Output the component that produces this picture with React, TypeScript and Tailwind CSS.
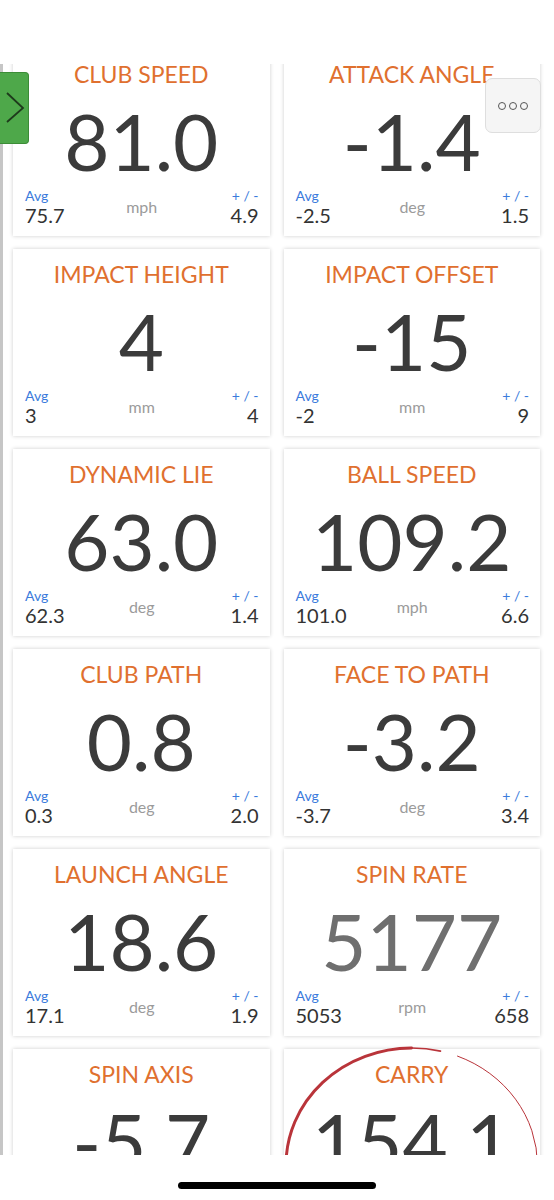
type Metric = {
  title: string
  value: string
  avg: string
  unit: string
  spread: string
  dim?: boolean
  circled?: boolean
}

const METRICS: Metric[] = [
  { title: 'CLUB SPEED', value: '81.0', avg: '75.7', unit: 'mph', spread: '4.9' },
  { title: 'ATTACK ANGLE', value: '-1.4', avg: '-2.5', unit: 'deg', spread: '1.5' },
  { title: 'IMPACT HEIGHT', value: '4', avg: '3', unit: 'mm', spread: '4' },
  { title: 'IMPACT OFFSET', value: '-15', avg: '-2', unit: 'mm', spread: '9' },
  { title: 'DYNAMIC LIE', value: '63.0', avg: '62.3', unit: 'deg', spread: '1.4' },
  { title: 'BALL SPEED', value: '109.2', avg: '101.0', unit: 'mph', spread: '6.6' },
  { title: 'CLUB PATH', value: '0.8', avg: '0.3', unit: 'deg', spread: '2.0' },
  { title: 'FACE TO PATH', value: '-3.2', avg: '-3.7', unit: 'deg', spread: '3.4' },
  { title: 'LAUNCH ANGLE', value: '18.6', avg: '17.1', unit: 'deg', spread: '1.9' },
  { title: 'SPIN RATE', value: '5177', avg: '5053', unit: 'rpm', spread: '658', dim: true },
  { title: 'SPIN AXIS', value: '-5.7', avg: '-6.1', unit: 'deg', spread: '2.3' },
  { title: 'CARRY', value: '154.1', avg: '140.2', unit: 'yds', spread: '9.8', circled: true },
]

function MetricCard({ m }: { m: Metric }) {
  return (
    <div className="relative flex flex-col h-[187px] bg-white shadow-[0_0_4px_rgba(0,0,0,0.2)]">
      <div className="mt-[17px] text-center text-[23px] leading-[17px] text-[#e0702f]">{m.title}</div>
      <div
        className={`mt-[19px] text-center text-[78px] leading-[78px] ${m.dim ? 'text-[#6f6f6f]' : 'text-[#3b3b3b]'}`}
      >
        {m.value}
      </div>
      <div className="mt-[9px] px-[12px] pr-[11px] grid grid-cols-3">
        <div className="flex flex-col items-start">
          <span className="text-[14px] leading-[14px] text-[#3a7bdc]">Avg</span>
          <span className="mt-[2px] text-[20px] leading-[20px] text-[#333]">{m.avg}</span>
        </div>
        <div className="pt-[10px] text-center text-[16px] leading-[16px] text-[#9b9b9b]">{m.unit}</div>
        <div className="flex flex-col items-end">
          <span className="text-[14px] leading-[14px] text-[#3a7bdc]">+ / -</span>
          <span className="mt-[2px] text-[20px] leading-[20px] text-[#333]">{m.spread}</span>
        </div>
      </div>

      {/* hand drawn red circle */}
      {m.circled && (
        <svg className="absolute left-0 top-0 overflow-visible pointer-events-none" width="256" height="187">
          <path d="M 2 116 A 126 117 0 0 1 127.5 -1" fill="none" stroke="#b9343a" strokeWidth="3" strokeLinecap="round" />
          <path d="M 127.5 -1 A 126 117 0 0 1 156.5 2.1" fill="none" stroke="#b9343a" strokeWidth="1.6" strokeLinecap="round" />
          <path d="M 173.5 7.1 A 126 117 0 0 1 253.5 116" fill="none" stroke="#b9343a" strokeWidth="1" strokeLinecap="round" />
        </svg>
      )}
    </div>
  )
}

export default function App() {
  return (
    <div className="relative w-[554px] h-[1200px] bg-white flex flex-col overflow-hidden font-['Lato',sans-serif]">
      <div className="h-[64px] shrink-0" />

      {/* Scrolling metrics grid */}
      <div className="h-[1091px] shrink-0 overflow-hidden border-l-[3px] border-[#c6c6c6]">
        <div className="-mt-[15px] grid grid-cols-2 gap-x-[14px] gap-y-[13px] pl-[10px] pr-[14px]">
          {METRICS.map((m) => (
            <MetricCard key={m.title} m={m} />
          ))}
        </div>
      </div>

      {/* Home indicator */}
      <div className="flex-1 flex justify-center pt-[27px]">
        <div className="w-[198px] h-[7px] rounded-full bg-black" />
      </div>

      {/* Side drawer tab */}
      <div className="absolute left-0 top-[72px] w-[29px] h-[72px] bg-[#4ea84a] border border-l-0 border-[#3c8c37] rounded-r-[4px]">
        <svg width="29" height="72" className="absolute -left-px -top-px">
          <polyline points="8,21 24,36 8,50" fill="none" stroke="#1e3a1c" strokeWidth="1.8" />
        </svg>
      </div>

      {/* More button */}
      <div className="absolute left-[485px] top-[78px] w-[56px] h-[55px] rounded-[7px] bg-[#f5f5f5] border border-[#dedede] flex items-center justify-center gap-[3px]">
        <span className="w-[8px] h-[8px] rounded-full border-[1.5px] border-[#555]" />
        <span className="w-[8px] h-[8px] rounded-full border-[1.5px] border-[#555]" />
        <span className="w-[8px] h-[8px] rounded-full border-[1.5px] border-[#555]" />
      </div>
    </div>
  )
}
